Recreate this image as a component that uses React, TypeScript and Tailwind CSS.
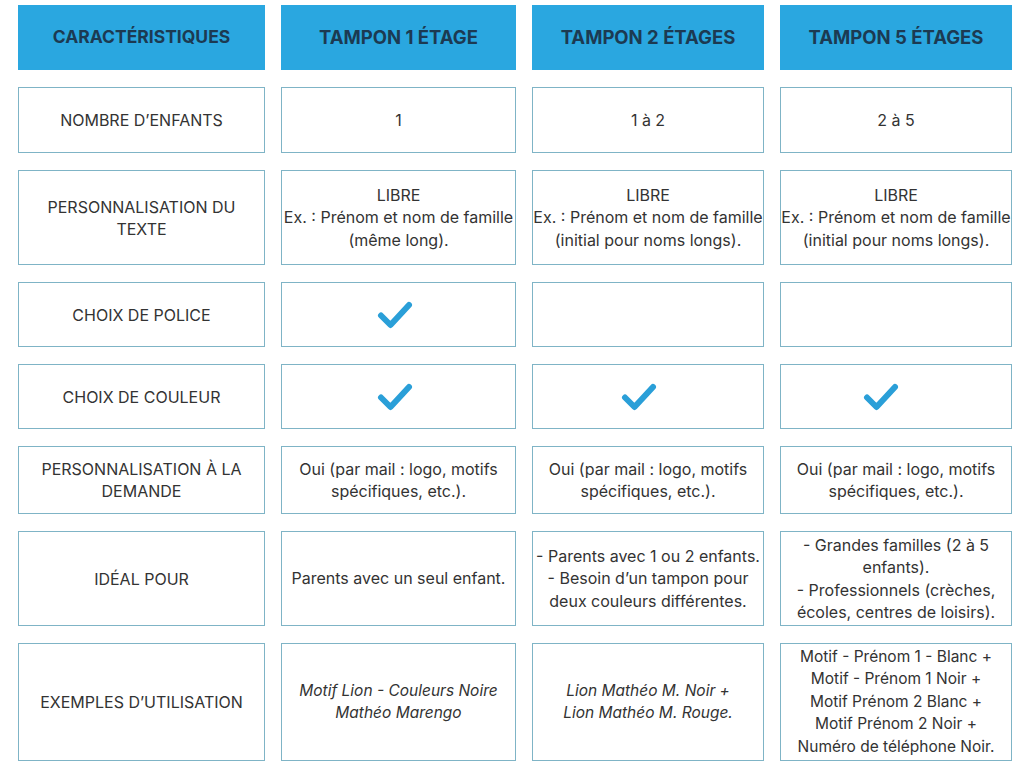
import type { ReactNode } from "react"

const headers = ["CARACTÉRISTIQUES", "TAMPON 1 ÉTAGE", "TAMPON 2 ÉTAGES", "TAMPON 5 ÉTAGES"]

function Check({ className }: { className?: string }) {
  return (
    <svg className={className} width="36" height="30" viewBox="0 0 36 30" fill="none">
      <path
        d="M4 15.5L13.5 25L32 5"
        stroke="#2a9fd8"
        strokeWidth="6"
        strokeLinecap="round"
        strokeLinejoin="round"
      />
    </svg>
  )
}

type Row = { label: ReactNode; h: string; cells: ReactNode[]; small?: boolean }

const rows: Row[] = [
  { label: "NOMBRE D’ENFANTS", h: "h-[66px]", cells: ["1", "1 à 2", "2 à 5"] },
  {
    label: (
      <>
        PERSONNALISATION DU
        <br />
        TEXTE
      </>
    ),
    h: "h-[95px]",
    cells: [
      <>
        LIBRE
        <br />
        Ex. : Prénom et nom de famille
        <br />
        (même long).
      </>,
      <>
        LIBRE
        <br />
        Ex. : Prénom et nom de famille
        <br />
        (initial pour noms longs).
      </>,
      <>
        LIBRE
        <br />
        Ex. : Prénom et nom de famille
        <br />
        (initial pour noms longs).
      </>,
    ],
  },
  { label: "CHOIX DE POLICE", h: "h-[65px]", cells: [<Check className="mr-[8px]" />, null, null] },
  {
    label: "CHOIX DE COULEUR",
    h: "h-[65px]",
    cells: [<Check className="mr-[8px]" />, <Check className="mr-[18px]" />, <Check className="mr-[30px]" />],
  },
  {
    label: (
      <>
        PERSONNALISATION À LA
        <br />
        DEMANDE
      </>
    ),
    h: "h-[68px]",
    cells: [0, 1, 2].map(() => (
      <>
        Oui (par mail : logo, motifs
        <br />
        spécifiques, etc.).
      </>
    )),
  },
  {
    label: "IDÉAL POUR",
    h: "h-[95px]",
    cells: [
      "Parents avec un seul enfant.",
      <>
        - Parents avec 1 ou 2 enfants.
        <br />
        - Besoin d’un tampon pour
        <br />
        deux couleurs différentes.
      </>,
      <>
        - Grandes familles (2 à 5
        <br />
        enfants).
        <br />
        - Professionnels (crèches,
        <br />
        écoles, centres de loisirs).
      </>,
    ],
  },
  {
    label: "EXEMPLES D’UTILISATION",
    h: "h-[118px]",
    small: true,
    cells: [
      <span className="italic">
        Motif Lion - Couleurs Noire
        <br />
        Mathéo Marengo
      </span>,
      <span className="italic">
        Lion Mathéo M. Noir +
        <br />
        Lion Mathéo M. Rouge.
      </span>,
      <>
        Motif - Prénom 1 - Blanc +
        <br />
        Motif - Prénom 1 Noir +
        <br />
        Motif Prénom 2 Blanc +
        <br />
        Motif Prénom 2 Noir +
        <br />
        Numéro de téléphone Noir.
      </>,
    ],
  },
]

export default function App() {
  return (
    <div className="w-[1024px] h-[768px] bg-white pt-[5px] pl-[18px] font-['Inter','Roboto',sans-serif] text-[#333333]">
      <div className="grid grid-cols-[247px_235px_232px_232px] gap-x-4 gap-y-[17px]">
        {headers.map((h, i) => (
          <div
            key={h}
            className={`h-[65px] bg-[#2aa7e0] flex items-center justify-center font-bold text-[#1c3a52] ${
              i === 0 ? "text-[17.5px]" : "text-[18.5px]"
            }`}
          >
            {h}
          </div>
        ))}
        {rows.map((row, r) => (
          <div key={r} className="contents">
            <div
              className={`${row.h} border border-[#7fb4c6] flex items-center justify-center text-center text-[16px] leading-[22px] px-1`}
            >
              {row.label}
            </div>
            {row.cells.map((c, j) => (
              <div
                key={j}
                className={`${row.h} border border-[#7fb4c6] flex items-center justify-center text-center whitespace-nowrap leading-[22.5px] ${
                  row.small ? "text-[15.5px]" : "text-[16px]"
                }`}
              >
                {c}
              </div>
            ))}
          </div>
        ))}
      </div>
    </div>
  )
}
